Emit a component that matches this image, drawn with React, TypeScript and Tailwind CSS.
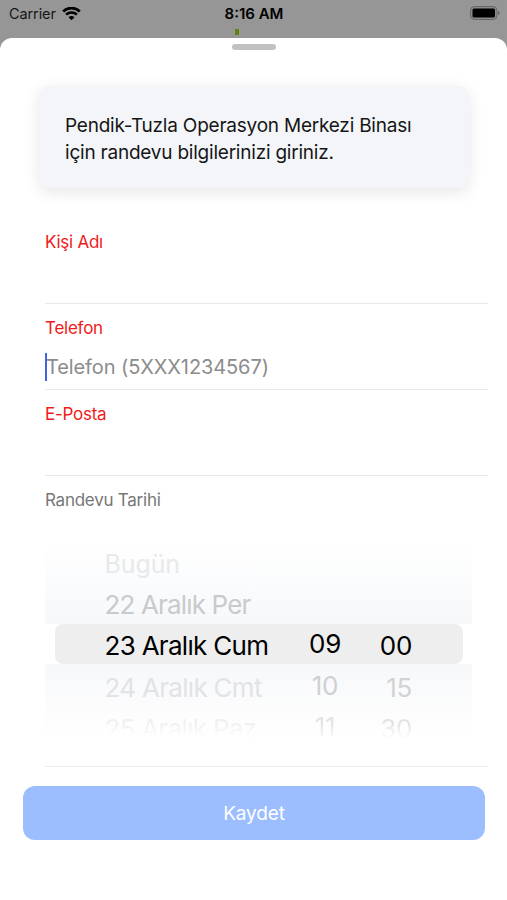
import React, { useState } from "react";

interface FieldProps {
  label: string;
  placeholder?: string;
  focused?: boolean;
}

interface PickerRow {
  text: string;
  className: string;
}

// rows fade out the further they are from the selected one
const days: PickerRow[] = [
  { text: "Bugün", className: "text-[#e8e9ea] text-[25px] tracking-[-0.1px]" },
  { text: "22 Aralık Per", className: "text-[#c8cacc] tracking-[-0.85px]" },
  { text: "23 Aralık Cum", className: "text-black" },
  { text: "24 Aralık Cmt", className: "text-[#e2e3e5]" },
  { text: "25 Aralık Paz", className: "bg-linear-to-b from-[#f0f0f1] from-35% to-[#fefefe] to-75% bg-clip-text text-transparent" },
];

const hours: PickerRow[] = [
  { text: "", className: "" },
  { text: "", className: "" },
  { text: "09", className: "text-black" },
  { text: "10", className: "text-[#cfd0d2]" },
  { text: "11", className: "bg-linear-to-b from-[#e2e3e4] from-35% to-[#f6f6f6] to-80% bg-clip-text text-transparent" },
];

const minutes: PickerRow[] = [
  { text: "", className: "" },
  { text: "", className: "" },
  { text: "00", className: "text-black" },
  { text: "15", className: "text-[#d2d3d5]" },
  { text: "30", className: "bg-linear-to-b from-[#e2e3e4] from-35% to-[#fbfbfb] to-75% bg-clip-text text-transparent" },
];

const StatusBar: React.FC = () => (
  <div className="grid h-7 grid-cols-3 items-center pl-[9px] pr-[8px] text-[14.5px] text-[#161616]">
    <div className="flex items-center gap-[6px]">
      <span className="tracking-[-0.1px]">Carrier</span>
      <svg width="19" height="14" viewBox="0 0 19 14" fill="none">
        <path d="M1.2 4.4C5.8 0 13.2 0 17.8 4.4" stroke="#000" strokeWidth="2.8" />
        <path d="M4.1 7.7C7.1 4.9 11.9 4.9 14.9 7.7" stroke="#000" strokeWidth="2.5" />
        <path d="M6.5 10.3C8.2 8.7 10.8 8.7 12.5 10.3L9.5 13.3Z" fill="#000" />
      </svg>
    </div>
    <span className="text-center text-[15px] font-semibold text-black">8:16 AM</span>
    <svg className="-mr-[2px] mb-[2px] justify-self-end" width="32" height="16" viewBox="0 0 32 16">
      <rect x="1.5" y="1.5" width="26.5" height="13" rx="4" fill="#8a8a8a" stroke="#666" strokeWidth="1" />
      <rect x="3.5" y="3.5" width="22.5" height="9" rx="1.5" fill="#000" />
      <path d="M29 6C31.2 6.5 31.2 9.5 29 10Z" fill="#666" />
    </svg>
  </div>
);

const Field: React.FC<FieldProps> = ({ label, placeholder, focused }) => (
  <div className="h-[86px] border-b border-[#e9e9ea] pt-[13px]">
    <div className="text-[17px] leading-[22px] tracking-[-0.25px] text-[#f01a1a]">{label}</div>
    <div className="mt-[14px] flex h-7 items-center">
      {focused && <span className="h-7 w-[2px] bg-[#3f66e0]" />}
      {placeholder && (
        <span className="-ml-px whitespace-nowrap text-[20px] tracking-[-0.1px] text-[#8c8c8c]">{placeholder}</span>
      )}
    </div>
  </div>
);

const PickerColumn: React.FC<{ rows: PickerRow[]; className: string }> = ({ rows, className }) => (
  <div className={className}>
    {rows.map((row, i) => (
      <div key={i} className="h-[41.2px] whitespace-nowrap leading-[41px]">
        <span className={row.className}>{row.text}</span>
      </div>
    ))}
  </div>
);

const DatePicker: React.FC = () => (
  <div className="grid h-[200px] w-[427px]">
    {/* wheel background with the selected band in the middle */}
    <div className="col-start-1 row-start-1">
      <div className="h-[84px] bg-linear-to-b from-white to-[#f6f8fa]" />
      <div className="ml-[10px] mr-[9px] h-10 rounded-[8px] bg-[#eeeeee]" />
      <div className="h-[76px] bg-linear-to-b from-[#f7f8fa] to-white" />
    </div>
    <div className="col-start-1 row-start-1 flex pt-[3px] text-[26px]">
      <PickerColumn rows={days} className="w-[190px] pl-[59.5px] tracking-[-0.7px]" />
      <PickerColumn rows={hours} className="-mt-[2px] ml-[60px] w-[60px] text-center tracking-[-0.3px]" />
      <PickerColumn rows={minutes} className="w-[57px] text-right tracking-[-0.3px]" />
    </div>
  </div>
);

const App: React.FC = () => {
  const [focused] = useState("Telefon");

  return (
    <div lang="tr" className="flex h-[900px] w-[507px] flex-col overflow-hidden bg-[#969696] font-['Inter','Liberation_Sans',sans-serif]">
      <StatusBar />
      <div className="h-[10px]">
        <div className="ml-[235px] mt-[1px] h-[6px] w-[4px] bg-[#638313]" />
      </div>

      <main className="flex-1 rounded-t-[12px] bg-white pt-[6px]">
        <div className="mx-auto h-[6px] w-[44px] rounded-full bg-[#c1c1c1]" />

        <div className="ml-[39px] mt-[36px] h-[102px] w-[430px] rounded-[10px] bg-[#f4f5f9] pl-[26px] pt-[26px] text-[19px] leading-[27px] tracking-[-0.22px] text-[#151515] shadow-[0_4px_16px_rgba(0,0,0,0.1)]">
          <p>Pendik-Tuzla Operasyon Merkezi Binası</p>
          <p>için randevu bilgilerinizi giriniz.</p>
        </div>

        <form className="ml-[45px] mr-[19px] mt-[30px]">
          <Field label="Kişi Adı" />
          <Field label="Telefon" placeholder="Telefon (5XXX1234567)" focused={focused === "Telefon"} />
          <Field label="E-Posta" />
          <div className="h-[291px] border-b border-[#ededee] pt-[13px]">
            <div className="mb-[29px] text-[17px] leading-[22px] tracking-[-0.25px] text-[#777777]">Randevu Tarihi</div>
            <DatePicker />
          </div>
        </form>

        <button className="ml-[23px] mt-[19px] h-[54px] w-[462px] rounded-[12px] bg-[#9cbdfe] pt-[2px] text-[19px] tracking-[-0.15px] text-white">
          Kaydet
        </button>
      </main>
    </div>
  );
};

export default App;
